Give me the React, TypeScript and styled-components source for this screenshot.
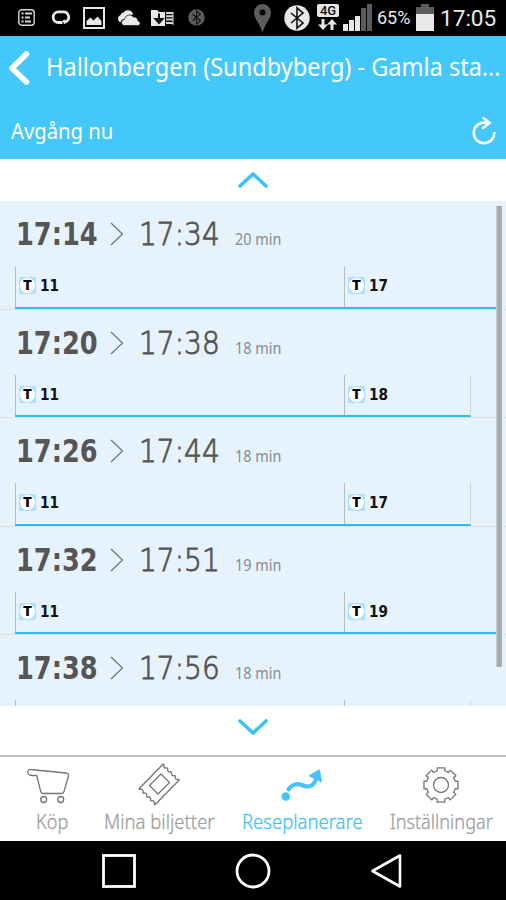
import React from "react";
import styled, { createGlobalStyle } from "styled-components";

const Global = createGlobalStyle`
  *{box-sizing:border-box}
  body{margin:0;background:#000;font-family:"Noto Sans",sans-serif}
  svg{display:block;flex:none}
`;

const Screen = styled.div`
  width: 506px; height: 900px; overflow: hidden;
  display: flex; flex-direction: column; background: #fff;
`;
const StatusBar = styled.div`
  height: 36px; flex: none; background: #000; color: #e8e8e8;
  display: flex; align-items: flex-start;
`;
const Slot = styled.div<{ $left: number; $top: number }>`
  margin-left: ${p => p.$left}px; padding-top: ${p => p.$top}px; flex: none;
`;
const StatusText = styled.div<{ $size: number; $width: number }>`
  font: 400 ${p => p.$size}px/36px Roboto, sans-serif; width: ${p => p.$width}px; white-space: nowrap;
`;
const NetBadge = styled.div`
  width: 22px; height: 13px; border-radius: 2px; background: #e8e8e8; color: #111;
  font: 500 13px/14px Roboto, sans-serif; text-align: center;
`;
const Squeeze = styled.span<{ $k: number }>`
  display: inline-block; white-space: nowrap; transform: scaleX(${p => p.$k}); transform-origin: 0 50%;
`;
const Header = styled.header`
  height: 123px; flex: none; background: #44c7fa; color: #fff;
`;
const TitleRow = styled.div`
  height: 62px; display: flex; align-items: center; padding-left: 8px;
`;
const Title = styled.h1`
  margin: 0 0 3px 16px; width: 460px; font-size: 25px; line-height: 34px; font-weight: 400;
`;
const SubRow = styled.div`
  height: 61px; display: flex; align-items: center; justify-content: space-between; padding: 5px 10px 0 11px;
  font-size: 22.5px; line-height: 30px;
`;
const Pager = styled.div<{ $h: number; $pad: number }>`
  height: ${p => p.$h}px; flex: none; display: flex; justify-content: center; padding-top: ${p => p.$pad}px;
`;
const List = styled.main`
  height: 505px; flex: none; overflow: hidden; background: #e6f3fc; position: relative;
`;
const Scrollbar = styled.div`
  position: absolute; left: 496px; top: 5px; width: 6px; height: 461px; background: #a6abae; border-left: 1px solid #c6cdd2;
`;
const Trip = styled.section`
  height: 108.6px; border-bottom: 1px solid #dcdfe2; padding-left: 15px;
`;
const Times = styled.div`
  height: 65px; display: flex; align-items: baseline; color: #555; padding: 13px 0 0 1px;
  font-family: "DejaVu Sans Condensed", "DejaVu Sans", sans-serif; font-size: 31.5px; line-height: 40px;
  svg { position: relative; top: 1px; }
`;
const Depart = styled.div` width: 94px; font-weight: 700; `;
const Arrive = styled.div`
  width: 95px; margin-left: 15px; font-weight: 200; font-family: "DejaVu Sans Light", "DejaVu Sans", sans-serif;
  -webkit-text-stroke: 0.9px #555;
`;
const Duration = styled.div`
  font: 400 15.5px/20px "Noto Sans", sans-serif; color: #838c91; padding-left: 1px;
`;
const Legs = styled.div<{ $w: number; $end: boolean }>`
  width: ${p => p.$w}px; height: 42.5px; display: flex; border-bottom: 2px solid #2cb9f5;
  border-right: ${p => (p.$end ? "1px solid #cbd6dd" : "0")};
`;
const Leg = styled.div<{ $w?: number }>`
  ${p => (p.$w ? `width:${p.$w}px;` : "flex:1;")}
  border-left: 1px solid #b2bfc7; padding: 0 0 1px 3px; display: flex; align-items: center; gap: 4px;
  font: 700 16px/20px "DejaVu Sans Condensed", "DejaVu Sans", sans-serif; color: #111;
`;
const LineNumber = styled.div` padding-top: 1px; `;
const Badge = styled.div`
  width: 17px; height: 17px; background: #b0e0fb; border-radius: 1px; display: flex; align-items: center; justify-content: center;
`;
const Disc = styled.div`
  width: 15px; height: 15px; border-radius: 50%; background: #fff; color: #000; text-align: center;
  font: 900 13px/15px Inter, sans-serif;
`;
const TabBar = styled.nav`
  height: 86px; flex: none; border-top: 2px solid #bcbcbc; background: #fff; display: flex;
`;
const Tab = styled.div<{ $w: number; $left: number; $on?: boolean }>`
  width: ${p => p.$w}px; margin-left: ${p => p.$left}px; flex: none; display: flex; flex-direction: column; align-items: center;
  color: ${p => (p.$on ? "#3fc3fb" : "#a0a0a0")};
`;
const TabIcon = styled.div<{ $shift?: number }>`
  height: 51px; display: flex; align-items: flex-start; padding-top: 5px; margin-left: -${p => p.$shift ?? 2}px;
`;
const TabLabel = styled.div`
  width: 100%; font-size: 19.5px; line-height: 28px; font-weight: 300; -webkit-text-stroke: 0.3px currentColor;
`;
const NavBar = styled.div`
  height: 59px; flex: none; background: #000; display: flex; justify-content: center; align-items: center; gap: 98px;
`;

const Bluetooth = ({ size, disc, rune }: { size: number; disc: string; rune: string }) => (
  <svg width={size} height={size} viewBox="0 0 26 26">
    <circle cx="13" cy="13" r="12.7" fill={disc} />
    <path d="M7 8l12 10-6 5.2V2.8L19 8 7 18" fill="none" stroke={rune} strokeWidth="1.6" />
  </svg>
);

const gearOutline = (() => {
  const profile: [number, number][] = [[-13, 17.5], [13, 17.5], [14.5, 14.7], [30.5, 14.7]];
  const points: string[] = [];
  for (let tooth = 0; tooth < 8; tooth++) {
    for (const [offset, r] of profile) {
      const a = ((tooth * 45 + offset - 90) * Math.PI) / 180;
      points.push(`${(441 + r * Math.cos(a)).toFixed(2)} ${(785 + r * Math.sin(a)).toFixed(2)}`);
    }
  }
  return `M${points.join("L")}Z`;
})();

const trips = [
  { from: "17:14", to: "17:34", min: 20, line: "17", w: 484, end: false },
  { from: "17:20", to: "17:38", min: 18, line: "18", w: 456, end: true },
  { from: "17:26", to: "17:44", min: 18, line: "17", w: 456, end: true },
  { from: "17:32", to: "17:51", min: 19, line: "19", w: 482, end: true },
  { from: "17:38", to: "17:56", min: 18, line: "", w: 456, end: true },
];

const Line = ({ n, w }: { n: string; w?: number }) => (
  <Leg $w={w}>
    {n && <><Badge><Disc>T</Disc></Badge><LineNumber><Squeeze $k={0.95}>{n}</Squeeze></LineNumber></>}
  </Leg>
);

export default function App() {
  return (
    <Screen>
      <Global />
      <StatusBar>
        <Slot $left={18} $top={9}>
          <svg width="17" height="17" viewBox="0 0 17 17" fill="none" stroke="#d8d8d8">
            <rect x=".8" y=".8" width="15.4" height="15.4" rx="3" strokeWidth="1.4" />
            <path d="M3.5 4.5h2M3.5 8.5h2M3.5 12.5h2M7 4.5h7M7 8.5h5M7 12.5h6" strokeWidth="2" />
          </svg>
        </Slot>
        <Slot $left={16} $top={10}>
          <svg width="20" height="16" viewBox="0 0 20 16"><path d="M11.500 12.500H7.500a5.300 5.300 0 0 1 0-10.600h5a5.300 5.300 0 0 1 2.500 9.900M12.800 10l1.500 3.500" fill="none" stroke="#e8e8e8" strokeWidth="2.800" /></svg>
        </Slot>
        <Slot $left={12} $top={7}>
          <svg width="22" height="22" viewBox="0 0 22 22"><rect x="1" y="1" width="20" height="20" fill="none" stroke="#e8e8e8" strokeWidth="2" /><path d="M3.500 18v-4l4-3.500 3 3 4-4 4 4.500v4z" fill="#e8e8e8" /></svg>
        </Slot>
        <Slot $left={11} $top={9}>
          <svg width="25" height="17" viewBox="0 0 25 17" fill="#e8e8e8"><path d="M4.500 13.500a4 4 0 0 1 0-7.500 3 3 0 0 1 3-2.500A5.500 5.500 0 0 1 17 4.500l-1 1.500a6 6 0 0 0-7 4 4 4 0 0 0-4.500 3.500z" /><path d="M8.500 16.500a3 3 0 0 1 0-6 5 5 0 0 1 9-2.500 4 4 0 0 1 4.500 4 2.300 2.300 0 0 1 .5 4.500z" stroke="#000" strokeWidth=".6" /></svg>
        </Slot>
        <Slot $left={10} $top={10}>
          <svg width="23" height="16" viewBox="0 0 23 16"><path d="M0 0h6l2 2h6v14H0z" fill="#e8e8e8" /><path d="M15 3h7M15 6.300h7M15 9.600h7M15 13h7" stroke="#d8d8d8" strokeWidth="2" /><path d="M22 2v13" stroke="#d8d8d8" /><path d="M8 3.500v7M4.500 9L8 13l3.500-4z" stroke="#111" strokeWidth="2" fill="#111" /></svg>
        </Slot>
        <Slot $left={14} $top={9}><Bluetooth size={17} disc="#5c5c5c" rune="#111" /></Slot>
        <Slot $left={49} $top={4}>
          <svg width="17" height="29" viewBox="0 0 17 29"><path fillRule="evenodd" d="M8.500 29C6.500 20 0 15 0 8.500a8.500 8.500 0 0 1 17 0C17 15 10.500 20 8.500 29zM8.500 5.500a3 3 0 1 0 0 6 3 3 0 0 0 0-6z" fill="#5c5c5c" /></svg>
        </Slot>
        <Slot $left={13} $top={5}><Bluetooth size={26} disc="#e8e8e8" rune="#111" /></Slot>
        <Slot $left={7} $top={4}>
          <NetBadge>4G</NetBadge>
          <svg width="22" height="14" viewBox="0 0 22 14"><path d="M6 2v7M15 13V6" stroke="#e8e8e8" strokeWidth="3" /><path d="M1 7.500h10L6 13zM10 7.500h10L15 2z" fill="#e8e8e8" /></svg>
        </Slot>
        <Slot $left={4} $top={4}>
          <svg width="29" height="27" viewBox="0 0 29 27"><path d="M0 20h5v7H0zM6 16h5v11H6zM12 12h5v15h-5z" fill="#e8e8e8" /><path d="M18 4h5v23h-5zM24 0h5v27h-5z" fill="#5c5c5c" /></svg>
        </Slot>
        <Slot $left={5} $top={0}><StatusText $size={18} $width={39}>65%</StatusText></Slot>
        <Slot $left={0} $top={4}>
          <svg width="18" height="27" viewBox="0 0 18 27"><path d="M5 0h8v3h5v8H0V3h5z" fill="#5c5c5c" /><path d="M0 10h18v17H0z" fill="#e8e8e8" /></svg>
        </Slot>
        <Slot $left={6} $top={1}><StatusText $size={22.6} $width={60}>17:05</StatusText></Slot>
      </StatusBar>
      <Header>
        <TitleRow>
          <svg width="22" height="36" viewBox="0 0 22 36"><path d="M18.500 5L4 19.300 18.500 33" fill="none" stroke="#fff" strokeWidth="5.500" strokeLinecap="round" strokeLinejoin="round" /></svg>
          <Title><Squeeze $k={0.941}>Hallonbergen (Sundbyberg) - Gamla sta…</Squeeze></Title>
        </TitleRow>
        <SubRow>
          <Squeeze $k={0.9}>Avgång nu</Squeeze>
          <svg width="24" height="28" viewBox="0 0 24 28" fill="none" stroke="#fff" strokeWidth="2.600"><path d="M22.300 15A10.300 10.300 0 1 1 14 5.800h3" /><path d="M11.500 1l6 5-6.500 5" strokeLinecap="round" /></svg>
        </SubRow>
      </Header>
      <Pager $h={42} $pad={11}>
        <svg width="32" height="20" viewBox="0 0 32 20"><path d="M3 16L16 4l13 12" fill="none" stroke="#39c2f8" strokeWidth="3.600" strokeLinecap="round" strokeLinejoin="round" /></svg>
      </Pager>
      <List>
        {trips.map(t => (
          <Trip key={t.from}>
            <Times>
              <Depart><Squeeze $k={0.905}>{t.from}</Squeeze></Depart>
              <svg width="14" height="24" viewBox="0 0 14 24"><path d="M1 1l11.500 11L1 23" fill="none" stroke="#6b7276" strokeWidth="1.200" /></svg>
              <Arrive><Squeeze $k={0.89}>{t.to}</Squeeze></Arrive>
              <Duration><Squeeze $k={0.93}>{t.min} min</Squeeze></Duration>
            </Times>
            <Legs $w={t.w} $end={t.end}>
              <Line n={t.line && "11"} w={329} />
              <Line n={t.line} />
            </Legs>
          </Trip>
        ))}
        <Scrollbar />
      </List>
      <Pager $h={49} $pad={11}>
        <svg width="32" height="20" viewBox="0 0 32 20"><path d="M3 4l13 12L29 4" fill="none" stroke="#39c2f8" strokeWidth="3.600" strokeLinecap="round" strokeLinejoin="round" /></svg>
      </Pager>
      <TabBar>
        <Tab $w={34} $left={36}>
          <TabIcon $shift={10}>
            <svg width="44" height="46" viewBox="26 762 44 46" fill="none" stroke="#757575" strokeWidth="1.300" strokeLinejoin="round"><path d="M30.500 769.500l35.500 3.500q3 .5 2.500 3l-4.500 15.500q-.6 2-2.500 2H43q-1.800 0-2.300-2l-4-16h-5q-4-.5-4-3.500 .5-3 2.800-2.500z" /><circle cx="43.700" cy="799.500" r="3" /><circle cx="60.700" cy="799.500" r="3" /></svg>
          </TabIcon>
          <TabLabel><Squeeze $k={0.93}>Köp</Squeeze></TabLabel>
        </Tab>
        <Tab $w={112} $left={34}>
          <TabIcon>
            <svg width="44" height="46" viewBox="137 762 44 46" fill="none" stroke="#757575" strokeWidth="1.300" strokeLinejoin="round">
              <path d="M163.200 764l.8 .8a2.200 2.200 0 0 0 3 3l.8 .8a2.200 2.200 0 0 0 3 3l.8 .8a2.200 2.200 0 0 0 3 3l.8 .8a2.200 2.200 0 0 0 3 3l.8 .8L155 804.700l-.8-.8a2.200 2.200 0 0 0-3-3l-.8-.8a2.200 2.200 0 0 0-3-3l-.8-.8a2.200 2.200 0 0 0-3-3l-.8-.8a2.200 2.200 0 0 0-3-3l-.8-.8z" />
              <path d="M161 774l8.500 8.500-11.500 11.500-8.500-8.500z" />
            </svg>
          </TabIcon>
          <TabLabel><Squeeze $k={0.95}>Mina biljetter</Squeeze></TabLabel>
        </Tab>
        <Tab $w={122} $left={26} $on>
          <TabIcon>
            <svg width="44" height="46" viewBox="280 762 44 46"><circle cx="285.800" cy="796.500" r="4.300" fill="#44c4fa" /><path d="M288.500 789.500c3-5 8-6.500 13-4.500s12 4 15-7.500" fill="none" stroke="#44c4fa" strokeWidth="4.200" strokeLinecap="round" /><path d="M319.500 769.800l2 12-12.500-6z" fill="#44c4fa" stroke="#44c4fa" strokeLinejoin="round" /></svg>
          </TabIcon>
          <TabLabel><Squeeze $k={0.948}>Reseplanerare</Squeeze></TabLabel>
        </Tab>
        <Tab $w={104} $left={26}>
          <TabIcon>
            <svg width="44" height="46" viewBox="419 762 44 46" fill="none" stroke="#757575" strokeWidth="1.300" strokeLinejoin="round"><path d={gearOutline} /><circle cx="441" cy="785" r="7.500" /></svg>
          </TabIcon>
          <TabLabel><Squeeze $k={0.93}>Inställningar</Squeeze></TabLabel>
        </Tab>
      </TabBar>
      <NavBar>
        <svg width="36" height="36" viewBox="0 0 36 36"><rect x="2.500" y="2.500" width="31" height="31" fill="none" stroke="#fff" strokeWidth="2.800" /></svg>
        <svg width="36" height="36" viewBox="0 0 36 36"><circle cx="18" cy="18" r="16" fill="none" stroke="#fff" strokeWidth="2.800" /></svg>
        <svg width="36" height="36" viewBox="0 0 36 36"><path d="M31 2.500v31L3.500 18z" fill="none" stroke="#fff" strokeWidth="2.600" strokeLinejoin="round" /></svg>
      </NavBar>
    </Screen>
  );
}
